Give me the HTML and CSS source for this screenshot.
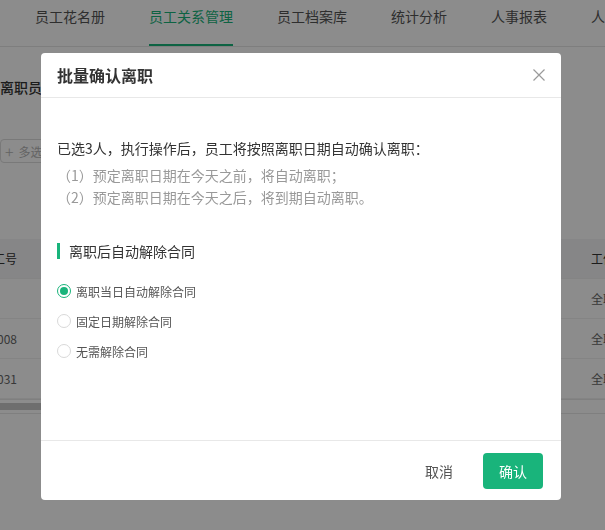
FILE: index.html
```html
<!DOCTYPE html>
<html lang="zh-CN">
<head>
<meta charset="utf-8">
<title>批量确认离职</title>
<link rel="stylesheet" href="styles.css">
</head>
<body>
<div class="page">
  <nav class="tabs">
    <a class="tab">员工花名册</a>
    <a class="tab active">员工关系管理</a>
    <a class="tab">员工档案库</a>
    <a class="tab">统计分析</a>
    <a class="tab">人事报表</a>
    <a class="tab">人事设置</a>
  </nav>
  <main class="content">
    <h2 class="page-title">离职员工</h2>
    <div class="toolbar">
      <button class="btn-outline"><span class="plus">+</span>多选操作</button>
    </div>
    <div class="table">
      <div class="row thead">
        <div class="cell c-id">工号</div>
        <div class="cell c-mid"></div>
        <div class="cell c-last">工作性质</div>
      </div>
      <div class="row">
        <div class="cell c-id"></div>
        <div class="cell c-mid"></div>
        <div class="cell c-last">全职</div>
      </div>
      <div class="row">
        <div class="cell c-id">YG0008</div>
        <div class="cell c-mid"></div>
        <div class="cell c-last">全职</div>
      </div>
      <div class="row">
        <div class="cell c-id">YG0031</div>
        <div class="cell c-mid"></div>
        <div class="cell c-last">全职</div>
      </div>
      <div class="hscroll"><div class="thumb"></div></div>
    </div>
  </main>
</div>

<div class="mask">
  <div class="modal">
    <div class="modal-header">
      <span class="modal-title">批量确认离职</span>
      <svg class="close" width="12" height="12" viewBox="0 0 12 12"><path d="M0.5 0.5 L11.5 11.5 M11.5 0.5 L0.5 11.5" stroke="#9a9a9a" stroke-width="1.2" fill="none"/></svg>
    </div>
    <div class="modal-body">
      <p class="lead">已选3人，执行操作后，员工将按照离职日期自动确认离职：</p>
      <p class="note first">（1）预定离职日期在今天之前，将自动离职；</p>
      <p class="note">（2）预定离职日期在今天之后，将到期自动离职。</p>
      <div class="section-title"><span class="bar"></span>离职后自动解除合同</div>
      <div class="radios">
        <label class="radio checked"><span class="dot"></span>离职当日自动解除合同</label>
        <label class="radio"><span class="dot"></span>固定日期解除合同</label>
        <label class="radio"><span class="dot"></span>无需解除合同</label>
      </div>
    </div>
    <div class="modal-footer">
      <button class="btn-text">取消</button>
      <button class="btn-primary">确认</button>
    </div>
  </div>
</div>
</body>
</html>
```

FILE: styles.css
```css
* { box-sizing: border-box; }
html, body {
  margin: 0;
  padding: 0;
  background: #fff;
  font-family: "Noto Sans CJK SC", "Noto Sans", sans-serif;
  color: #333;
  overflow: hidden;
}
.page { width: 605px; height: 530px; overflow: hidden; }

.tabs {
  display: flex;
  height: 47px;
  padding-left: 35px;
  gap: 44px;
  border-bottom: 1px solid #e6e6e6;
}
.tab {
  height: 46px;
  padding-top: 6px;
  font-size: 14px;
  line-height: 20px;
  color: #555;
  white-space: nowrap;
  border-bottom: 2px solid transparent;
}
.tab.active { color: #19b47b; border-bottom-color: #19b47b; }

.content { display: flex; flex-direction: column; }
.page-title {
  margin: 29px 0 0 0;
  font-size: 14px;
  line-height: 22px;
  font-weight: 500;
  color: #333;
}
.toolbar { margin-top: 41px; display: flex; }
.btn-outline {
  height: 24px;
  display: flex;
  align-items: center;
  gap: 5px;
  padding: 0 10px 0 4px;
  font-family: inherit;
  font-size: 12px;
  color: #b5b5b5;
  background: #fff;
  border: 1px solid #dcdcdc;
  border-radius: 4px;
}
.plus { font-size: 16px; font-weight: 300; line-height: 1; }

.table { margin-top: 76px; display: flex; flex-direction: column; }
.row {
  display: flex;
  height: 40px;
  align-items: center;
  font-size: 12px;
  color: #666;
  border-bottom: 1px solid #f0f0f0;
}
.row.thead { background: #f4f5f6; color: #333; }
.cell { white-space: nowrap; }
.c-id { width: 17px; display: flex; justify-content: flex-end; }
.c-mid { flex: 1; }
.c-last { width: 14px; overflow: hidden; }
.hscroll {
  height: 15px;
  border-top: 1px solid #e8e8e8;
  border-bottom: 1px solid #e8e8e8;
  padding-top: 3px;
}
.thumb { width: 300px; height: 7px; background: #c9c9c9; }

.mask {
  position: fixed;
  inset: 0;
  background: rgba(0, 0, 0, 0.45);
  display: flex;
  align-items: flex-start;
  padding: 53px 0 0 41px;
}
.modal {
  width: 520px;
  height: 447px;
  background: #fff;
  border-radius: 4px;
  display: flex;
  flex-direction: column;
  overflow: hidden;
}
.modal-header {
  box-sizing: content-box;
  height: 44px;
  padding: 0 16px;
  display: flex;
  align-items: center;
  justify-content: space-between;
  border-bottom: 1px solid #e8e8e8;
}
.modal-title { font-size: 16px; font-weight: 600; color: #333; }
.close { display: block; }

.modal-body { flex: 1; padding: 39px 16px 0 16px; }
.lead { margin: 0; font-size: 14px; line-height: 22px; color: #333; }
.note { margin: 0; font-size: 14px; line-height: 22px; color: #999; }
.note.first { margin-top: 5px; }
.section-title {
  margin-top: 33px;
  display: flex;
  align-items: center;
  gap: 9px;
  font-size: 14px;
  line-height: 20px;
  color: #333;
}
.bar { width: 3px; height: 16px; background: #19b47b; }
.radios { margin-top: 15px; display: flex; flex-direction: column; }
.radio {
  height: 30px;
  display: flex;
  align-items: center;
  gap: 5px;
  font-size: 12px;
  color: #555;
}
.dot {
  width: 14px;
  height: 14px;
  border-radius: 50%;
  border: 1px solid #d9d9d9;
  background: #fff;
  display: flex;
  align-items: center;
  justify-content: center;
}
.radio.checked .dot { border-color: #19b47b; }
.radio.checked .dot::after {
  content: "";
  width: 8px;
  height: 8px;
  border-radius: 50%;
  background: #19b47b;
}

.modal-footer {
  box-sizing: content-box;
  height: 59px;
  border-top: 1px solid #e8e8e8;
  display: flex;
  align-items: center;
  justify-content: flex-end;
  padding-right: 18px;
  gap: 16px;
}
.btn-text {
  height: 36px;
  padding: 0 14px;
  border: none;
  background: transparent;
  font-family: inherit;
  font-size: 14px;
  color: #555;
}
.btn-primary {
  width: 60px;
  height: 36px;
  border: none;
  border-radius: 4px;
  background: #19b47b;
  color: #fff;
  font-family: inherit;
  font-size: 14px;
}
```
